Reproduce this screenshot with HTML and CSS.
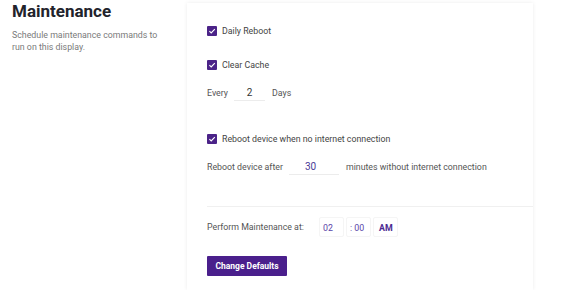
FILE: index.html
```html
<!DOCTYPE html>
<html lang="en">
<head>
  <meta charset="UTF-8" />
  <title>Maintenance</title>
  <link rel="stylesheet" href="styles.css">
</head>
<body>
  <div class="intro">
    <h2 class="title">Maintenance</h2>
    <p class="intro-text">Schedule maintenance commands to run on this display.</p>
  </div>
  <div class="card">
    <label class="row check-row first">
      <span class="check"><svg viewBox="0 0 10 10" width="10" height="10"><path d="M2.4 5.2 L4.2 7 L7.8 3.2" fill="none" stroke="#fff" stroke-width="1.1"/></svg></span>
      Daily Reboot
    </label>
    <label class="row check-row cache">
      <span class="check"><svg viewBox="0 0 10 10" width="10" height="10"><path d="M2.4 5.2 L4.2 7 L7.8 3.2" fill="none" stroke="#fff" stroke-width="1.1"/></svg></span>
      Clear Cache
    </label>
    <div class="row every">
      <span>Every</span>
      <span class="line-input days-input">2</span>
      <span>Days</span>
    </div>
    <label class="row check-row internet">
      <span class="check"><svg viewBox="0 0 10 10" width="10" height="10"><path d="M2.4 5.2 L4.2 7 L7.8 3.2" fill="none" stroke="#fff" stroke-width="1.1"/></svg></span>
      Reboot device when no internet connection
    </label>
    <div class="row after">
      <span>Reboot device after</span>
      <span class="line-input minutes-input">30</span>
      <span>minutes without internet connection</span>
    </div>
    <div class="divider"></div>
    <div class="row time-row">
      <span class="time-label">Perform Maintenance at:</span>
      <span class="time-box">02</span>
      <span class="time-box">: 00</span>
      <span class="time-box ampm">AM</span>
    </div>
    <button class="button-fill">Change Defaults</button>
  </div>
</body>
</html>
```

FILE: styles.css
```css
body {
  font-family: 'Roboto', sans-serif;
  margin: 0;
  display: flex;
  background-color: #ffffff;
  color: #555555;
  font-size: 8.8px;
  overflow: hidden;
  height: 290px;
}

.intro {
  width: 175px;
  padding-left: 12px;
}

.title {
  font-family: 'Roboto', sans-serif;
  font-size: 17px;
  font-weight: 700;
  color: #22232b;
  margin: 1px 0 0 0;
  line-height: 20px;
}

.intro-text {
  font-size: 8.8px;
  line-height: 12px;
  color: #7a7a7a;
  margin: 8px 0 0 0;
  width: 160px;
}

.card {
  margin-top: 3px;
  width: 326px;
  padding: 20px 0 0 20px;
  box-shadow: 0 0 4px rgba(0, 0, 0, 0.08);
  display: flex;
  flex-direction: column;
  align-items: flex-start;
}

.row {
  display: flex;
  align-items: center;
  height: 16px;
}

.check-row {
  gap: 5px;
  color: #444444;
}

.check {
  width: 10px;
  height: 10px;
  background-color: #4b2388;
  border-radius: 1px;
  display: flex;
}

.cache {
  margin-top: 18px;
}

.every {
  margin-top: 12px;
}

.internet {
  margin-top: 30px;
}

.after {
  margin-top: 12px;
}

.line-input {
  height: 15px;
  line-height: 15px;
  border-bottom: 1px solid #ececec;
  font-size: 10px;
}

.days-input {
  width: 31px;
  text-align: center;
  margin: 0 7px 0 6px;
  color: #333333;
}

.minutes-input {
  width: 34px;
  padding-left: 16px;
  margin: 0 7px 0 6px;
  color: #4a3c96;
}

.divider {
  margin-top: 31px;
  width: 100%;
  height: 1px;
  background-color: #f0f0f0;
}

.time-row {
  margin-top: 10px;
  height: 20px;
}

.time-label {
  width: 112px;
}

.time-box {
  height: 20px;
  line-height: 20px;
  padding: 0 3px;
  border: 1px solid #f5f5f5;
  border-radius: 2px;
  box-sizing: border-box;
  width: 25px;
  margin-right: 2px;
  color: #5a45a8;
}

.ampm {
  font-weight: 700;
  color: #4b2a90;
  padding-left: 5px;
}

.button-fill {
  margin-top: 19px;
  background-color: #4a1f8c;
  color: #ffffff;
  border: none;
  border-radius: 1px;
  font-family: 'Roboto', sans-serif;
  font-weight: 700;
  font-size: 8.5px;
  width: 80px;
  height: 20px;
  padding: 0;
  cursor: pointer;
}
```
